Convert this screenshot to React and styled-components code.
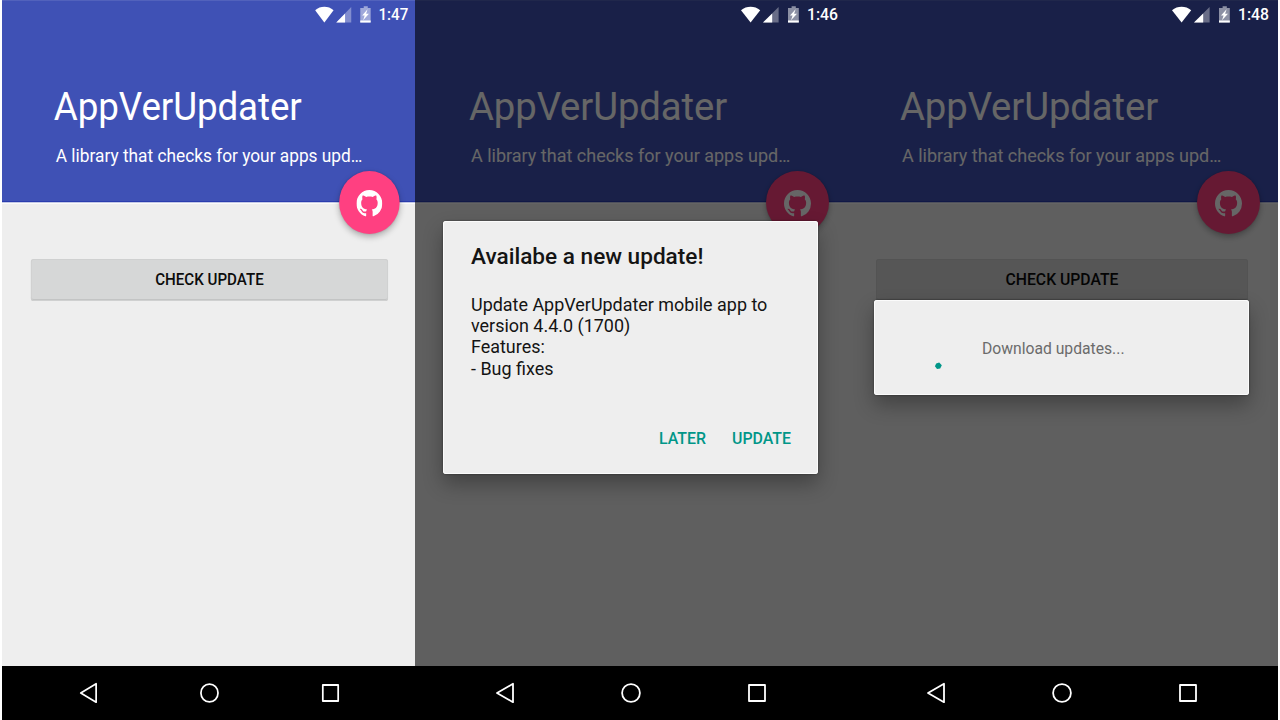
import React from "react";
import styled, { createGlobalStyle } from "styled-components";

const GlobalStyle = createGlobalStyle`
  * { box-sizing: border-box; }
  body { margin: 0; background: #fff; font-family: Roboto, "Noto Sans", sans-serif; overflow: hidden; }
`;

const Gallery = styled.main`
  display: flex;
  width: 1280px;
  height: 720px;
  padding: 0 2px;
`;

const Slot = styled.section`
  flex: none;
  width: ${(p) => p.$width}px;
  height: 720px;
  overflow: hidden;
`;

const Phone = styled.div`
  position: relative;
  display: grid;
  grid-template-rows: 202px 1fr 54px;
  width: 432px;
  height: 720px;
  background: #eee;
  transform: ${(p) => (p.$squeeze ? `scaleX(${p.$squeeze})` : "none")};
  transform-origin: 0 0;
`;

const Header = styled.header`
  display: flex;
  flex-direction: column;
  padding: 82px 20px 0 54px;
  background: #3f51b5;
  color: #fff;
  box-shadow: inset 0 1px 0 #5262bc, inset 0 -1px 0 #2a3cae, 0 1px 0 #c3c8e6, 0 2px 0 #fafafa;
`;

const Title = styled.h1`
  margin: 0;
  font-size: 38.25px;
  letter-spacing: -0.08px;
  line-height: 50px;
  font-weight: 400;
`;

const Subtitle = styled.p`
  margin: 13px 0 0 2px;
  font-size: 18px;
  line-height: 22px;
  white-space: nowrap;
`;

const Body = styled.div`
  padding: 57px 30px 0;
`;

const CheckButton = styled.button`
  display: block;
  width: 372px;
  height: 42px;
  padding: 0;
  border: 0;
  border-radius: 3px;
  background: #d6d7d7;
  box-shadow: inset 0 0 0 1px #cfd0d0, inset 0 -2px 0 #c3c4c4;
  color: #0c0c0c;
  font: 500 15.75px/42px Roboto, sans-serif;
`;

const Fab = styled.button`
  position: absolute;
  top: 171px;
  left: 351px;
  display: flex;
  align-items: center;
  justify-content: center;
  width: 63px;
  height: 63px;
  padding: 1px 0 0;
  border: 0;
  border-radius: 50%;
  background: #ff4081;
  box-shadow: 0 3px 6px rgba(0, 0, 0, 0.28), 0 0 2px rgba(0, 0, 0, 0.15);
`;

const Scrim = styled.div`
  position: absolute;
  inset: 0 0 54px;
  display: flex;
  align-items: center;
  padding: 28px 0 0 28px;
  background: rgba(0, 0, 0, 0.6);
`;

const DialogCard = styled.div`
  width: 375px;
  height: ${(p) => p.$height}px;
  border-radius: 3px;
  background: #eee;
  box-shadow: inset 0 0 0 1px #fbfbfb, 0 0 2px rgba(0, 0, 0, 0.5), 0 10px 20px rgba(0, 0, 0, 0.3);
`;

const UpdateCard = styled(DialogCard)`
  display: flex;
  flex-direction: column;
  padding: 21px 27px 22px 28px;
  color: #141414;
`;

const DialogTitle = styled.h2`
  margin: 0 0 22px;
  font-size: 22.6px;
  line-height: 30px;
  font-weight: 500;
`;

const Message = styled.p`
  margin: 0;
  font-size: 17.95px;
  line-height: 21.4px;
  white-space: pre;
`;

const Actions = styled.div`
  display: flex;
  justify-content: flex-end;
  gap: 26px;
  margin-top: auto;
`;

const ActionButton = styled.button`
  padding: 0;
  border: 0;
  background: none;
  color: #009688;
  font: 500 15.9px/26px Roboto, sans-serif;
`;

const ProgressCard = styled(DialogCard)`
  display: flex;
  padding: 37px 0 0 60px;
  gap: 40px;
`;

const ProgressText = styled.span`
  color: #6b6b6b;
  font-size: 15.7px;
  line-height: 24px;
`;

const Spinner = styled.svg`
  flex: none;
  width: 8px;
  height: 8px;
  margin-top: 25px;
`;

const StatusBar = styled.div`
  position: absolute;
  top: 0;
  right: 9px;
  display: flex;
  align-items: center;
  height: 29px;
  color: #fff;
`;

const Clock = styled.span`
  margin-left: 7px;
  font-size: 15.75px;
  font-weight: 500;
`;

const NavBar = styled.nav`
  display: flex;
  justify-content: space-between;
  padding: 15px 78px 0 78px;
  background: #000;
`;

const NavIcon = styled.svg`
  width: 24px;
  height: 24px;
  fill: none;
  stroke: #fff;
  stroke-width: 1.8;
  stroke-linejoin: round;
`;

const GithubMark = () => (
  <svg width="27" height="27" viewBox="0 0 16 16" fill="#fff">
    <path d="M8 0C3.58 0 0 3.58 0 8c0 3.54 2.29 6.53 5.47 7.59.4.07.55-.17.55-.38 0-.19-.01-.82-.01-1.49-2.01.37-2.53-.49-2.69-.94-.09-.23-.48-.94-.82-1.13-.28-.15-.68-.52-.01-.53.63-.01 1.08.58 1.23.82.72 1.21 1.87.87 2.33.66.07-.52.28-.87.51-1.07-1.780-.2-3.640-.89-3.640-3.950 0-.87.31-1.590.82-2.150-.08-.2-.36-1.020.08-2.120 0 0 .67-.21 2.200.82.64-.18 1.320-.27 2-.27.68 0 1.360.09 2 .27 1.530-1.040 2.200-.82 2.200-.82.44 1.100.16 1.920.08 2.120.51.56.82 1.270.82 2.150 0 3.070-1.870 3.750-3.650 3.950.29.25.54.73.54 1.480 0 1.070-.01 1.930-.01 2.200 0 .21.15.46.55.38A8.013 8.013 0 0 0 16 8c0-4.420-3.580-8-8-8z" />
  </svg>
);

const StatusIcons = () => (
  <svg width="59" height="18" viewBox="0 0 59 18" fill="#fff">
    <path d="M0 4.200C5.600-.3 13.600-.3 19.200 4.200L9.600 16.500z" />
    <path d="M37.600 1V16.500H22z" opacity=".35" />
    <path d="M31.200 7.400V16.500H22z" />
    <path d="M50.600.300h4.200v1.600h3V16.500H47V1.900h3.600z" opacity=".5" />
    <path d="M47 14.500h10.800v2H47z" />
    <path d="M54.600 3.200l-5.600 6.400h2.600l-1.600 4.600 6-6.400h-2.900z" />
  </svg>
);

function Device({ width, time, squeeze, children }) {
  return (
    <Slot $width={width}>
      <Phone $squeeze={squeeze}>
        <Header>
          <Title>AppVerUpdater</Title>
          <Subtitle>A library that checks for your apps upd…</Subtitle>
        </Header>
        <Body>
          <CheckButton>CHECK UPDATE</CheckButton>
        </Body>
        <NavBar>
          <NavIcon viewBox="0 0 24 24"><path d="M20 2.800V21.200L4 12z" /></NavIcon>
          <NavIcon viewBox="0 0 24 24"><circle cx="12" cy="12" r="8.900" /></NavIcon>
          <NavIcon viewBox="0 0 24 24"><path d="M4 4h16v16H4z" /></NavIcon>
        </NavBar>
        <Fab aria-label="GitHub"><GithubMark /></Fab>
        {children && <Scrim>{children}</Scrim>}
        <StatusBar>
          <StatusIcons />
          <Clock>{time}</Clock>
        </StatusBar>
      </Phone>
    </Slot>
  );
}

export default function App() {
  return (
    <>
      <GlobalStyle />
      <Gallery>
        <Device width={413} time="1:47" squeeze={0.9605} />
        <Device width={431} time="1:46">
          <UpdateCard $height={253}>
            <DialogTitle>Availabe a new update!</DialogTitle>
            <Message>{"Update AppVerUpdater mobile app to\nversion 4.4.0 (1700)\nFeatures:\n- Bug fixes"}</Message>
            <Actions>
              <ActionButton>LATER</ActionButton>
              <ActionButton>UPDATE</ActionButton>
            </Actions>
          </UpdateCard>
        </Device>
        <Device width={432} time="1:48">
          <ProgressCard $height={95}>
            <Spinner viewBox="0 0 8 8">
              <path d="M5.200.600L7.800 3.200 6.200 6.400 3 7 .9 4.300 2.200 1.600z" fill="#009688" />
            </Spinner>
            <ProgressText>Download updates...</ProgressText>
          </ProgressCard>
        </Device>
      </Gallery>
    </>
  );
}
